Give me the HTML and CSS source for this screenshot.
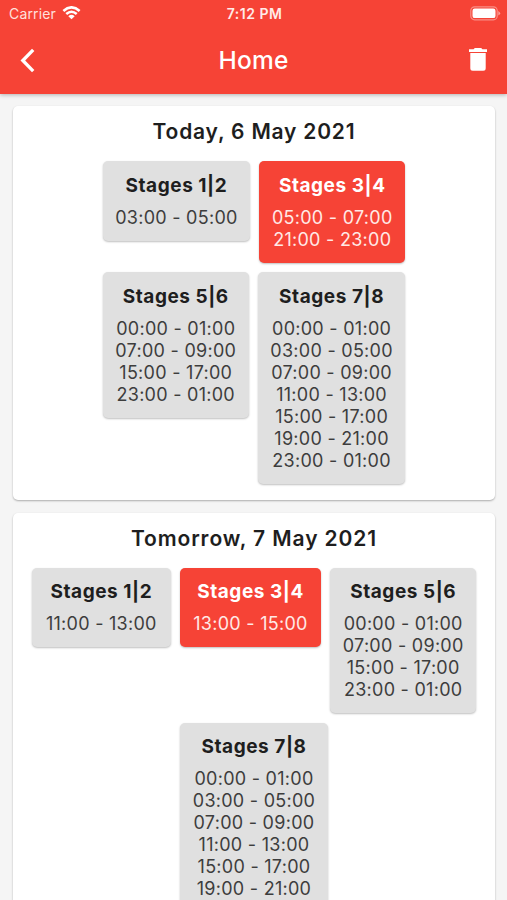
FILE: index.html
```html
<!DOCTYPE html>
<html lang="en">
<head>
<meta charset="utf-8">
<title>Home</title>
<link rel="stylesheet" href="styles.css">
</head>
<body>
<header class="appbar">
  <div class="status">
    <div class="carrier">Carrier
      <svg class="wifi" viewBox="0 0 20 15"><g fill="none" stroke="#fff" stroke-width="2.8"><path d="M1.3 5.3Q10-2.4 18.7 5.3"/><path d="M4.4 8.6Q10 3.7 15.6 8.6"/></g><path fill="#fff" d="M6.6 10.9Q10 8 13.4 10.9L10 14.3Z"/></svg>
    </div>
    <div class="clock">7:12 PM</div>
    <svg class="battery" viewBox="0 0 31 15"><rect x=".8" y=".8" width="26.4" height="13" rx="3.8" fill="none" stroke="#fff" stroke-opacity=".4" stroke-width="1.2"/><rect x="2.5" y="2.5" width="23" height="9.6" rx="2.2" fill="#fff"/><path d="M28.3 5Q32 7.3 28.3 9.6Z" fill="#fff" fill-opacity=".5"/></svg>
  </div>
  <nav class="toolbar">
    <svg class="back" viewBox="0 0 16 25"><path d="M13.2 1.8L2.8 12.5L13.2 23.2" fill="none" stroke="#fff" stroke-width="3.3"/></svg>
    <h1>Home</h1>
    <svg class="trash" viewBox="0 0 18 23"><path fill="#fff" d="M0 1.3H4.6L5.8 0H12.2L13.4 1.3H18V3.9H0ZM1.3 5.1H16.7V20.2Q16.7 22.7 14.2 22.7H3.8Q1.3 22.7 1.3 20.2Z"/></svg>
  </nav>
</header>
<main>
  <section class="day">
    <h2>Today, 6 May 2021</h2>
    <div class="tiles">
      <article class="tile w148"><h3>Stages 1|2</h3><p>03:00 - 05:00</p></article>
      <article class="tile w146 active"><h3>Stages 3|4</h3><p>05:00 - 07:00</p><p>21:00 - 23:00</p></article>
      <article class="tile w146"><h3>Stages 5|6</h3><p>00:00 - 01:00</p><p>07:00 - 09:00</p><p>15:00 - 17:00</p><p>23:00 - 01:00</p></article>
      <article class="tile w148"><h3>Stages 7|8</h3><p>00:00 - 01:00</p><p>03:00 - 05:00</p><p>07:00 - 09:00</p><p>11:00 - 13:00</p><p>15:00 - 17:00</p><p>19:00 - 21:00</p><p>23:00 - 01:00</p></article>
    </div>
  </section>
  <section class="day">
    <h2 class="wide">Tomorrow, 7 May 2021</h2>
    <div class="tiles">
      <article class="tile w139"><h3>Stages 1|2</h3><p>11:00 - 13:00</p></article>
      <article class="tile w141 active"><h3>Stages 3|4</h3><p>13:00 - 15:00</p></article>
      <article class="tile w146"><h3>Stages 5|6</h3><p>00:00 - 01:00</p><p>07:00 - 09:00</p><p>15:00 - 17:00</p><p>23:00 - 01:00</p></article>
      <article class="tile w148"><h3>Stages 7|8</h3><p>00:00 - 01:00</p><p>03:00 - 05:00</p><p>07:00 - 09:00</p><p>11:00 - 13:00</p><p>15:00 - 17:00</p><p>19:00 - 21:00</p></article>
    </div>
  </section>
</main>
</body>
</html>
```
FILE: styles.css
```css
* { box-sizing: border-box; }
html, body { height: 100%; }
body {
  margin: 0;
  display: flex;
  flex-direction: column;
  overflow: hidden;
  background: #f5f5f5;
  color: #1e1e1e;
  font-family: Inter, "Liberation Sans", sans-serif;
}
h1, h2, h3, p { margin: 0; }
svg { display: block; }

.appbar {
  flex: none;
  height: 94px;
  background: #f64336;
  color: #fff;
  box-shadow: 0 1px 4px rgba(0, 0, 0, .28);
  z-index: 1;
}
.status {
  display: grid;
  grid-template-columns: 1fr auto 1fr;
  height: 27px;
  padding: 0 7px 0 9px;
  align-items: center;
}
.carrier {
  display: flex;
  align-items: center;
  gap: 6px;
  font-size: 14px;
  letter-spacing: .15px;
  color: #ffe0dc;
}
.wifi { width: 19px; height: 14px; margin-top: -2px; }
.clock { font-size: 14px; font-weight: 600; letter-spacing: .5px; color: #ffebe8; }
.battery { width: 31px; height: 15px; justify-self: end; margin: -1px -1px 0 0; }
.toolbar {
  display: grid;
  grid-template-columns: 1fr auto 1fr;
  align-items: center;
  height: 66px;
  padding: 0 20px;
}
.back { width: 16px; height: 25px; }
.toolbar h1 { font-size: 24.5px; line-height: 30px; font-weight: 500; letter-spacing: .2px; }
.trash { width: 18px; height: 23px; justify-self: end; margin-top: -1px; }

main { padding: 12px 12px 0 13px; }
.day {
  margin-bottom: 12.5px;
  padding: 12px 10px 16.5px;
  border-radius: 5px;
  background: #fff;
  box-shadow: 0 1px 2px rgba(0, 0, 0, .3);
}
.day h2 {
  margin-bottom: 16px;
  text-align: center;
  font-size: 21px;
  line-height: 27px;
  font-weight: 600;
  letter-spacing: .8px;
}
.day h2.wide { letter-spacing: .9px; }
.tiles {
  display: flex;
  flex-wrap: wrap;
  justify-content: center;
  align-items: flex-start;
  gap: 9.5px 9.2px;
}
.tile {
  padding: 13.5px 0 12px;
  border-radius: 5px;
  background: #e0e0e0;
  box-shadow: 0 1px 2px rgba(0, 0, 0, .25);
  text-align: center;
}
.day:first-child .tiles { padding: 0 75px; }
.w139 { width: 139px; }
.w141 { width: 141px; }
.w146 { width: 146px; }
.w148 { width: 147.3px; }
.tile h3 {
  margin-bottom: 10px;
  font-size: 19px;
  line-height: 22px;
  font-weight: 700;
  letter-spacing: .55px;
}
.tile p { font-size: 18px; line-height: 22px; letter-spacing: .27px; color: #3d3d3d; }
.active { background: #f64336; color: #fff; }
.active p { color: #ffe9e6; }
```
